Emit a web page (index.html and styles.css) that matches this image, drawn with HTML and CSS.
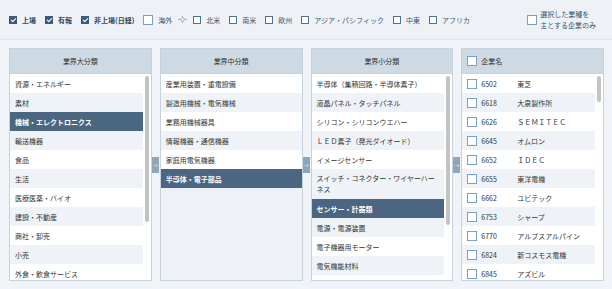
FILE: index.html
```html
<!DOCTYPE html>
<html lang="ja">
<head>
    <meta charset="UTF-8">
    <meta name="viewport" content="width=device-width, initial-scale=1.0">
    <title>業種検索</title>
    <link rel="stylesheet" href="styles.css">
</head>
<body>
    <header class="filter-bar">
        <label class="opt strong"><span class="box on"></span>上場</label>
        <label class="opt strong"><span class="box on"></span>有報</label>
        <label class="opt strong"><span class="box on"></span>非上場(日経)</label>
        <label class="opt"><span class="box big"></span>海外</label>
        <svg class="tree-icon" width="9" height="7" viewBox="0 0 9 7">
            <path d="M0 3.5h2.5M6.5 3.5H9M4.5 0v1.5M4.5 5.5V7" stroke="#9fb2c4" stroke-width="1" fill="none"/>
            <circle cx="4.5" cy="3.5" r="1.8" stroke="#9fb2c4" stroke-width="1" fill="none"/>
        </svg>
        <label class="opt"><span class="box"></span>北米</label>
        <label class="opt"><span class="box"></span>南米</label>
        <label class="opt"><span class="box"></span>欧州</label>
        <label class="opt"><span class="box"></span>アジア・パシフィック</label>
        <label class="opt"><span class="box"></span>中東</label>
        <label class="opt"><span class="box"></span>アフリカ</label>
        <label class="opt main-only"><span class="box big"></span><span>選択した業種を<br>主とする企業のみ</span></label>
    </header>

    <main class="board">
        <section class="panel">
            <div class="panel-head">業界大分類</div>
            <div class="panel-body">
                <ul class="list">
                    <li>資源・エネルギー</li>
                    <li>素材</li>
                    <li class="selected">機械・エレクトロニクス</li>
                    <li>輸送機器</li>
                    <li>食品</li>
                    <li>生活</li>
                    <li>医療医薬・バイオ</li>
                    <li>建設・不動産</li>
                    <li>商社・卸売</li>
                    <li>小売</li>
                    <li>外食・飲食サービス</li>
                    <li>情報通信・メディア</li>
                    <li>金融</li>
                </ul>
                <div class="scroll"><div class="thumb thumb-industry"></div></div>
            </div>
        </section>

        <div class="link"><span class="arrow">→</span></div>

        <section class="panel">
            <div class="panel-head">業界中分類</div>
            <div class="panel-body">
                <ul class="list">
                    <li>産業用装置・重電設備</li>
                    <li>製造用機械・電気機械</li>
                    <li>業務用機械器具</li>
                    <li>情報機器・通信機器</li>
                    <li>家庭用電気機器</li>
                    <li class="selected">半導体・電子部品</li>
                </ul>
            </div>
        </section>

        <div class="link"><span class="arrow">→</span></div>

        <section class="panel">
            <div class="panel-head">業界小分類</div>
            <div class="panel-body">
                <ul class="list">
                    <li>半導体（集積回路・半導体素子）</li>
                    <li>液晶パネル・タッチパネル</li>
                    <li>シリコン・シリコンウエハー</li>
                    <li>ＬＥＤ素子（発光ダイオード）</li>
                    <li>イメージセンサー</li>
                    <li class="wrap">スイッチ・コネクター・ワイヤーハーネス</li>
                    <li class="selected">センサー・計器類</li>
                    <li>電源・電源装置</li>
                    <li>電子機器用モーター</li>
                    <li>電気機能材料</li>
                    <li>電池</li>
                </ul>
                <div class="scroll"><div class="thumb thumb-sub"></div></div>
            </div>
        </section>

        <div class="link"><span class="arrow">→</span></div>

        <section class="panel">
            <div class="panel-head company-head"><span class="box big"></span>企業名</div>
            <div class="panel-body">
                <ul class="list companies">
                    <li><span class="box big"></span><span class="code">6502</span>東芝</li>
                    <li><span class="box big"></span><span class="code">6618</span>大泉製作所</li>
                    <li><span class="box big"></span><span class="code">6626</span>ＳＥＭＩＴＥＣ</li>
                    <li><span class="box big"></span><span class="code">6645</span>オムロン</li>
                    <li><span class="box big"></span><span class="code">6652</span>ＩＤＥＣ</li>
                    <li><span class="box big"></span><span class="code">6655</span>東洋電機</li>
                    <li><span class="box big"></span><span class="code">6662</span>ユビテック</li>
                    <li><span class="box big"></span><span class="code">6753</span>シャープ</li>
                    <li><span class="box big"></span><span class="code">6770</span>アルプスアルパイン</li>
                    <li><span class="box big"></span><span class="code">6824</span>新コスモス電機</li>
                    <li><span class="box big"></span><span class="code">6845</span>アズビル</li>
                </ul>
                <div class="scroll"><div class="thumb thumb-company"></div></div>
            </div>
        </section>
    </main>
</body>
</html>
```

FILE: styles.css
```css
* {
    box-sizing: border-box;
}

body {
    margin: 0;
    width: 612px;
    height: 289px;
    overflow: hidden;
    background: #f0f4f8;
    font-family: "Noto Sans CJK JP", sans-serif;
    font-size: 7px;
    color: #333;
}

/* top filter bar */
.filter-bar {
    display: flex;
    align-items: center;
    height: 40px;
    padding: 0 16px 0 9px;
    background: #eef2f6;
    border-bottom: 1px solid #dfe6ec;
}

.opt {
    display: flex;
    align-items: center;
    gap: 5px;
    margin-right: 9px;
    color: #3a5670;
    white-space: nowrap;
}

.opt.strong {
    font-weight: bold;
    color: #2d4963;
}

.box {
    display: inline-block;
    flex: none;
    width: 8px;
    height: 8px;
    border: 1px solid #54728f;
    background: #fff;
}

.box.on {
    background: #3c5b79;
    border-color: #3c5b79;
    position: relative;
}

.box.on::after {
    content: "";
    position: absolute;
    left: 2px;
    top: 0.5px;
    width: 2px;
    height: 4px;
    border: solid #fff;
    border-width: 0 1px 1px 0;
    transform: rotate(45deg);
}

.box.big {
    width: 10px;
    height: 10px;
    border-color: #7c9ebf;
}

.tree-icon {
    margin: 0 6px 0 -3px;
}

.main-only {
    margin: 0 0 0 auto;
    gap: 3px;
    line-height: 11px;
}

/* panels */
.board {
    display: flex;
    height: 249px;
    padding: 8px 8px 8px 9px;
}

.panel {
    flex: 1;
    display: flex;
    flex-direction: column;
    min-width: 0;
    border: 1px solid #c6d2dd;
    background: #eef2f6;
}

.panel-head {
    height: 25px;
    display: flex;
    align-items: center;
    justify-content: center;
    background: #cdd9e3;
    border-bottom: 1px solid #c6d2dd;
    color: #333;
}

.company-head {
    justify-content: flex-start;
    gap: 4px;
    padding-left: 5px;
}

.panel-body {
    flex: 1;
    display: flex;
    min-height: 0;
}

.list {
    flex: 1;
    margin: 0;
    padding: 0;
    list-style: none;
    overflow: hidden;
}

.list li {
    height: 19px;
    display: flex;
    align-items: center;
    padding: 0 5px;
    background: #fff;
    white-space: nowrap;
}

.list li:nth-child(even) {
    background: #eff3f7;
}

.list li.wrap {
    height: 30px;
    white-space: normal;
    line-height: 11px;
}

.list li.selected {
    background: #4a6680;
    color: #fff;
    font-weight: bold;
}

.companies li {
    gap: 4px;
}

.code {
    width: 32px;
}

.scroll {
    width: 8px;
    flex: none;
    background: #fff;
    padding: 2px 2px 0;
}

.thumb {
    background: #c3c3c3;
    border-radius: 2px;
}

.thumb-industry {
    height: 146px;
}

.thumb-sub {
    height: 149px;
}

.thumb-company {
    height: 26px;
}

/* arrows between panels */
.link {
    width: 8px;
    flex: none;
    display: flex;
    align-items: center;
}

.arrow {
    width: 7px;
    height: 16px;
    display: flex;
    align-items: center;
    justify-content: center;
    background: #8ea5ba;
    color: #fff;
    font-size: 5px;
}
```
